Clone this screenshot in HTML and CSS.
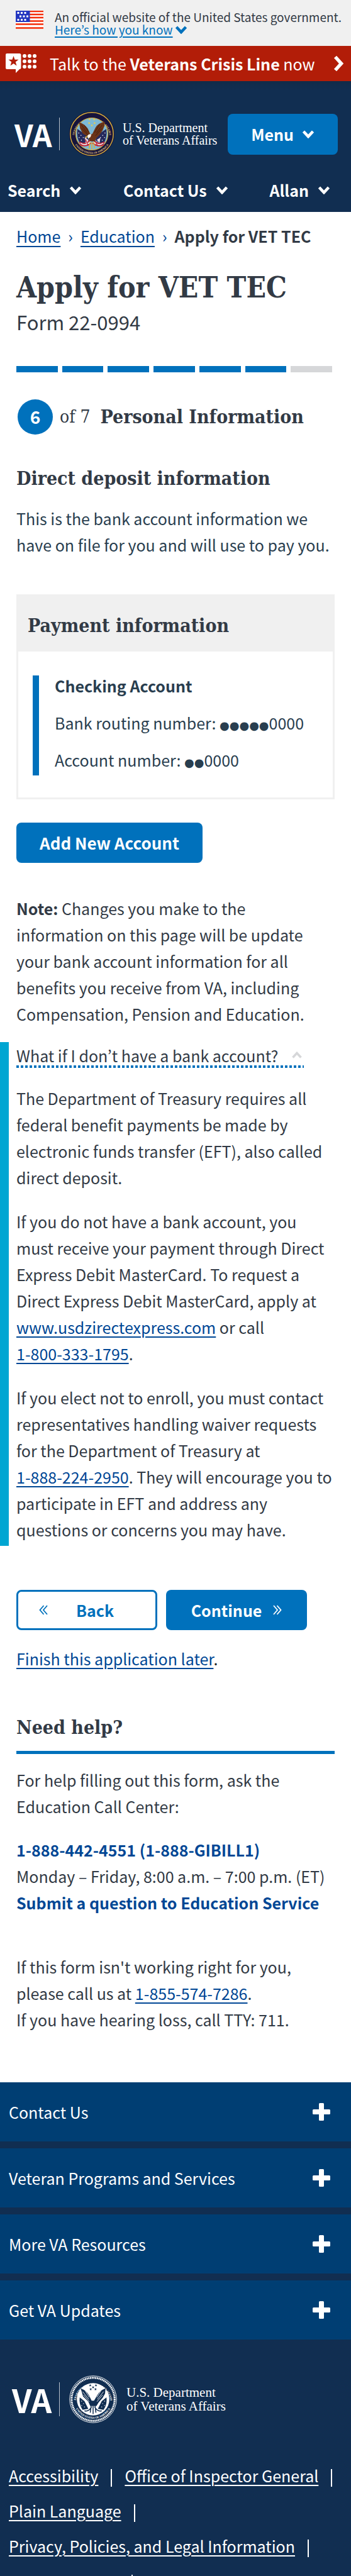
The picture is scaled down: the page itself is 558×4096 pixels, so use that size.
FILE: index.html
```html
<!DOCTYPE html>
<html lang="en">
<head>
<meta charset="utf-8">
<meta name="viewport" content="width=device-width, initial-scale=1">
<title>Apply for VET TEC | Veterans Affairs</title>
<link rel="stylesheet" href="styles.css">
</head>
<body>
<svg class="defs" aria-hidden="true">
  <symbol id="chev" viewBox="0 0 20 14"><path d="M2.500 3 10 11l7.500-8" fill="none" stroke="currentColor" stroke-width="4.600"/></symbol>
  <symbol id="plus" viewBox="0 0 28 28"><path d="M11.500 0h5q1.500 0 1.500 1.500V10h8.500q1.500 0 1.500 1.500v5q0 1.500-1.500 1.500H18v8.500q0 1.500-1.500 1.500h-5q-1.500 0-1.500-1.500V18H1.500Q0 18 0 16.500v-5Q0 10 1.500 10H10V1.500Q10 0 11.500 0z" fill="currentColor"/></symbol>
  <symbol id="star" viewBox="-10 -10 20 20"><path d="M0-10 2.400-3.100 9.500-3.100 3.800 1.200 5.900 8.100 0 4-5.900 8.100-3.800 1.200-9.500-3.100-2.400-3.100z" fill="currentColor"/></symbol>
</svg>

<div class="gov">
  <svg class="flag" viewBox="0 0 44 29" aria-hidden="true">
    <rect width="44" height="29" fill="#fff"/>
    <path d="M22 1h22M22 6h22M22 11h22M22 16.500h22M0 21.500h44M0 27.500h44" stroke="#f42e0a" stroke-width="2.400"/>
    <rect width="22.500" height="18" fill="#2336c0"/>
    <path d="M2.500 3.500h15M6 9h15M2.500 14.500h15" stroke="#fff" stroke-width="3" stroke-dasharray="3 2.500"/>
  </svg>
  <div class="gov-text">
    <span>An official website of the United States government.</span>
    <button type="button" class="gov-more"><span>Here’s how you know</span><svg class="chev" aria-hidden="true"><use href="#chev"/></svg></button>
  </div>
</div>

<a class="crisis" href="#crisis">
  <svg class="crisis-icon" viewBox="0 0 50 32" aria-hidden="true">
    <path d="M2 0h20q2.500 0 2.500 2.500V23q0 2-2.500 2l-6 6v-6H2q-2 0-2-2V2Q0 0 2 0z" fill="#fff"/>
    <use href="#star" x="4" y="4" width="17" height="17" color="#b21d08"/>
    <g fill="#fff"><circle cx="30" cy="4" r="3"/><circle cx="38" cy="4" r="3"/><circle cx="46" cy="4" r="3"/><circle cx="30" cy="12.500" r="3"/><circle cx="38" cy="12.500" r="3"/><circle cx="46" cy="12.500" r="3"/><circle cx="30" cy="21" r="3"/><circle cx="38" cy="21" r="3"/><circle cx="46" cy="21" r="3"/></g>
  </svg>
  <span class="crisis-text">Talk to the <b>Veterans Crisis Line</b> now</span>
  <svg class="crisis-arrow" viewBox="0 0 17 26" aria-hidden="true"><path d="M3 2.500 12.500 13 3 23.500" fill="none" stroke="#fff" stroke-width="5.500"/></svg>
</a>

<header class="header">
  <div class="brand-row">
    <a class="brand" href="#home">
      <span class="va">VA</span>
      <svg class="seal" viewBox="-50 -50 100 100" aria-hidden="true">
        <circle r="50" fill="#17143c"/><circle r="47.500" fill="none" stroke="#d9b23c" stroke-width="2"/>
        <path id="arcTop" d="M-39 4A39.200 39.200 0 0 1 39 4" fill="none"/>
        <path id="arcBot" d="M-43 8A43.700 43.700 0 0 0 43 8" fill="none"/>
        <text class="seal-text gold"><textPath href="#arcTop" startOffset="50%" text-anchor="middle">DEPARTMENT OF VETERANS AFFAIRS</textPath></text>
        <text class="seal-text gold"><textPath href="#arcBot" startOffset="50%" text-anchor="middle">UNITED STATES OF AMERICA</textPath></text>
        <circle r="35.500" fill="#7db9d6" stroke="#d9b23c" stroke-width="1.500"/>
        <path d="M-32-11Q-22-4-12 2L-6 14-24 24Q-35 10-32-11zM32-11Q22-4 12 2L8 14 24 24Q35 10 32-11z" fill="#25295c"/>
        <path d="M-29-2h.1M-24 3h.1M-28 8h.1M-19 8h.1M-23 14h.1M29-2h.1M24 3h.1M28 8h.1M19 8h.1M23 14h.1" stroke="#fff" stroke-width="2" stroke-linecap="round"/>
        <path d="M-28 18Q-16 26-4 14M-27 23Q-14 30-2 20M28 18Q16 26 4 14M27 23Q14 30 2 20" fill="none" stroke="#c4283a" stroke-width="3"/>
        <path d="M-25 20.500Q-14 28-3 17M25 20.500Q14 28 3 17" fill="none" stroke="#fff" stroke-width="1.800"/>
        <path d="M-28-26Q-16-22-9-12L-3 1 1 0 8-14Q14-24 28-27L28-18 24-8 17 2 10 9 6 17-5 16-8 7-20-1-26-12z" fill="#6b3418"/>
        <path d="M-23-20-10-2M-22-12-8 3M23-20 10-2M22-12 8 4M17-21 6-3M-17-20-7-4" stroke="#3e1c0c" stroke-width="1.200"/>
        <path d="M-10 4q3-5 9-3l-2 6-5 3z" fill="#f5f1e8"/><path d="M-10 4l-6 3 5 2z" fill="#e9b72e"/>
        <path d="M-16 7l8 6-4 12zM11 13l8-5-2 12z" fill="#e9e2ea"/>
        <path d="M-4 18-6 32M0 18V34M4 18 6 31" stroke="#e2b13b" stroke-width="2.200"/><path d="M-14 12-8 26M9 20 14 27" stroke="#c4283a" stroke-width="2"/>
        <g color="#f2cd3f"><use href="#star" x="-8" y="-35" width="6" height="6"/><use href="#star" x="2" y="-35" width="6" height="6"/><use href="#star" x="-9" y="-27" width="6" height="6"/><use href="#star" x="3" y="-27" width="6" height="6"/><use href="#star" x="-3" y="-22" width="6" height="6"/></g>
      </svg>
      <span class="dept">U.S. Department<br>of Veterans Affairs</span>
    </a>
    <button type="button" class="btn menu">Menu <svg class="chev" aria-hidden="true"><use href="#chev"/></svg></button>
  </div>
  <nav class="tools" aria-label="Site tools">
    <button type="button">Search <svg class="chev" aria-hidden="true"><use href="#chev"/></svg></button>
    <button type="button">Contact Us <svg class="chev" aria-hidden="true"><use href="#chev"/></svg></button>
    <button type="button">Allan <svg class="chev" aria-hidden="true"><use href="#chev"/></svg></button>
  </nav>
</header>

<main class="main">
  <nav class="crumbs" aria-label="Breadcrumb"><a href="#home">Home</a><i>›</i><a href="#education">Education</a><i>›</i><b>Apply for VET TEC</b></nav>
  <h1>Apply for VET TEC</h1>
  <p class="form-no">Form 22-0994</p>
  <div class="progress" role="progressbar" aria-label="Form progress" aria-valuenow="6" aria-valuemin="0" aria-valuemax="7"><i class="on"></i><i class="on"></i><i class="on"></i><i class="on"></i><i class="on"></i><i class="on"></i><i></i></div>
  <div class="step"><span class="step-no">6</span><span class="step-of">of 7</span><h2>Personal Information</h2></div>

  <h3 class="sub">Direct deposit information</h3>
  <p class="intro">This is the bank account information we have on file for you and will use to pay you.</p>
  <section class="card">
    <h3>Payment information</h3>
    <div class="card-body"><div class="account">
      <p><b>Checking Account</b></p>
      <p>Bank routing number: <span class="dots">●●●●●</span>0000</p>
      <p>Account number: <span class="dots">●●</span>0000</p>
    </div></div>
  </section>
  <button type="button" class="btn add">Add New Account</button>
  <p class="note"><b>Note:</b> Changes you make to the information on this page will be update your bank account information for all benefits you receive from VA, including Compensation, Pension and Education.</p>

  <section class="info">
    <button type="button" class="info-toggle" aria-expanded="true">What if I don’t have a bank account?<svg class="caret" viewBox="0 0 16 11" aria-hidden="true"><path d="M1.500 9.500 8 2.500l6.500 7" fill="none" stroke="#d6d7d9" stroke-width="3.600"/></svg></button>
    <p>The Department of Treasury requires all federal benefit payments be made by electronic funds transfer (EFT), also called direct deposit.</p>
    <p>If you do not have a bank account, you must receive your payment through Direct Express Debit MasterCard. To request a Direct Express Debit MasterCard, apply at <a href="#express">www.usdzirectexpress.com</a> or call <a class="tel" href="tel:18003331795">1-800-333-1795</a>.</p>
    <p>If you elect not to enroll, you must contact representatives handling waiver requests for the Department of Treasury at <a class="tel" href="tel:18882242950">1-888-224-2950</a>. They will encourage you to participate in EFT and address any questions or concerns you may have.</p>
  </section>

  <div class="pager">
    <button type="button" class="btn back"><svg class="dbl" viewBox="0 0 14 16" aria-hidden="true"><path d="M7.500 1 1.500 8l6 7M13 1 7 8l6 7" fill="none" stroke="currentColor" stroke-width="1.800"/></svg><span>Back</span></button>
    <button type="button" class="btn next">Continue<svg class="dbl" viewBox="0 0 14 16" aria-hidden="true"><path d="M6.500 1l6 7-6 7M1 1l6 7-6 7" fill="none" stroke="currentColor" stroke-width="1.800"/></svg></button>
  </div>
  <p class="later"><a href="#later">Finish this application later</a>.</p>

  <section class="help">
    <h3>Need help?</h3>
    <p>For help filling out this form, ask the Education Call Center:</p>
    <p class="contact"><a href="tel:18884424551">1-888-442-4551 (1-888-GIBILL1)</a><br>Monday – Friday, 8:00 a.m. – 7:00 p.m. (ET)<br><a href="#ask">Submit a question to Education Service</a></p>
    <p>If this form isn't working right for you, please call us at <a class="tel" href="tel:18555747286">1-855-574-7286</a>.<br>If you have hearing loss, call TTY: 711.</p>
  </section>
</main>

<footer class="footer">
  <div class="acc">
    <button type="button">Contact Us<svg class="plus" aria-hidden="true"><use href="#plus"/></svg></button>
    <button type="button">Veteran Programs and Services<svg class="plus" aria-hidden="true"><use href="#plus"/></svg></button>
    <button type="button">More VA Resources<svg class="plus" aria-hidden="true"><use href="#plus"/></svg></button>
    <button type="button">Get VA Updates<svg class="plus" aria-hidden="true"><use href="#plus"/></svg></button>
  </div>
  <a class="brand foot" href="#home">
    <span class="va">VA</span>
    <svg class="seal" viewBox="-50 -50 100 100" aria-hidden="true">
      <circle r="49" fill="none" stroke="#fff" stroke-width="1.200"/>
      <circle r="45" fill="none" stroke="#fff" stroke-width="4" stroke-dasharray="2.500 1.100"/>
      <path id="arcTopW" d="M-36.500 4A36.700 36.700 0 0 1 36.500 4" fill="none"/>
      <path id="arcBotW" d="M-40 8A40.800 40.800 0 0 0 40 8" fill="none"/>
      <text class="seal-text white"><textPath href="#arcTopW" startOffset="50%" text-anchor="middle">DEPARTMENT OF VETERANS AFFAIRS</textPath></text>
      <text class="seal-text white"><textPath href="#arcBotW" startOffset="50%" text-anchor="middle">UNITED STATES OF AMERICA</textPath></text>
      <circle r="34" fill="#fff"/>
      <g color="#112e51"><use href="#star" x="-9" y="-32" width="6" height="6"/><use href="#star" x="3" y="-32" width="6" height="6"/><use href="#star" x="-3" y="-28" width="6" height="6"/><use href="#star" x="-8" y="-24" width="6" height="6"/><use href="#star" x="2" y="-24" width="6" height="6"/></g>
      <path d="M-26-23Q-14-18-9-9L-3 3 2 3 9-9Q14-18 26-23L25-12 20-3 12 6 7 14-6 14-10 5-21-6z" fill="#112e51"/>
      <path d="M-22-16-9 0M-20-9-8 5M22-16 9 0M20-9 8 5M16-17 8-4M-16-17-8-4" stroke="#fff" stroke-width="1.100"/>
      <path d="M-28-4-18 4-10 20-22 22Q-30 10-28-4zM28-4 18 4 10 20 22 22Q30 10 28-4z" fill="#112e51"/>
      <path d="M-24 4h.1M-20 9h.1M-24 13h.1M-18 16h.1M24 4h.1M20 9h.1M24 13h.1M18 16h.1" stroke="#fff" stroke-width="1.800" stroke-linecap="round"/>
      <path d="M-18 24Q-10 27-3 16M18 24Q10 27 3 16M-4 14-6 28M0 14V31M4 14 6 28" fill="none" stroke="#112e51" stroke-width="2"/>
    </svg>
    <span class="dept">U.S. Department<br>of Veterans Affairs</span>
  </a>
  <ul class="links">
    <li><a href="#a11y">Accessibility</a></li><li><a href="#oig">Office of Inspector General</a></li><li><a href="#plain">Plain Language</a></li><li><a href="#privacy">Privacy, Policies, and Legal Information</a></li><li><a href="#contact">VA.gov Contact</a></li>
  </ul>
</footer>
</body>
</html>
```
FILE: styles.css
```css
*{box-sizing:border-box}
html,body{height:100%}
body{margin:0;overflow:hidden;background:#fff;color:#323a45;font:25px/42px "Noto Sans CJK KR","Open Sans",sans-serif}
p,h1,h2,h3,ul{margin:0;padding:0}
button{margin:0;padding:0;border:0;background:none;color:inherit;font:inherit;text-align:left}
a{color:#004795;text-decoration-thickness:2px;text-underline-offset:4px}
i{font-style:normal}
h1,h2,h3,.step-of{font-family:"DejaVu Serif Condensed","DejaVu Serif",serif}
.tel{white-space:nowrap}
.defs{position:absolute;width:0;height:0}
.chev{width:20px;height:14px}

.gov{display:flex;gap:18px;height:73px;padding:17px 16px 0 25px;background:#f0f0f0}
.flag{flex:none;width:44px;height:29px}
.gov-text{display:flex;flex-direction:column;font-size:19px;line-height:20px;white-space:nowrap}
.gov-more{display:flex;align-items:center;gap:3px;color:#0071bc;text-decoration:underline;text-decoration-thickness:2px;text-underline-offset:3px}

.crisis{display:flex;align-items:center;height:56px;padding:0 11px 0 9px;background:#b21d08;color:#fff;text-decoration:none}
.crisis-icon{width:50px;height:32px}
.crisis-text{margin-left:20px}
.crisis-arrow{width:17px;height:26px;margin-left:auto}

.header{height:208px;padding-top:48px;background:linear-gradient(#112b49,#112e51 14px);color:#fff;font-weight:700}
.brand-row{display:flex;align-items:center;justify-content:space-between;padding:0 21px 0 23px}
.brand{display:flex;align-items:center;color:#fff;text-decoration:none}
.va{display:flex;align-items:center;width:72px;height:52px;border-right:1px solid #b8c0cb;font-size:48px;font-weight:700;line-height:52px}
.seal{width:72px;height:72px;margin:0 13px 0 15px}
.seal-text{font:700 6px "Liberation Serif",serif}
.gold{fill:#e5cb7d}
.white{fill:#fff}
.dept{font:400 20px/20px "Liberation Serif",serif;white-space:nowrap}
.btn{border-radius:8px;background:#0071bc;color:#fff;font-weight:700}
.menu{display:flex;align-items:center;gap:13px;height:65px;padding:0 37px}
.tools{display:flex;justify-content:space-between;padding:32px 33px 0 12px}
.tools button{display:flex;align-items:center;gap:14px}

.main{padding:17px 26px 0}
.crumbs{display:flex;gap:12px}
.crumbs a{text-underline-offset:5px}
.crumbs i{color:#004795}
h1{margin-top:31px;font-size:46px;line-height:60px}
.form-no{margin-top:4px;font-size:31px;line-height:42px}
.progress{display:flex;gap:7px;margin-top:49px;padding-right:4px}
.progress i{flex:1;height:10px;background:#d6d7d9}
.progress .on{background:#0071bc}
.step{display:flex;align-items:center;margin:43px 0 0 2px}
.step-no{width:56px;height:56px;border-radius:50%;background:#0071bc;color:#fff;font-size:28px;font-weight:700;line-height:54px;text-align:center}
.step-of{margin-left:11px;font-size:28px}
h2{margin-left:16px;font-size:30px}
h3{font-size:30px;line-height:42px}
.sub{margin-top:49px}
.intro{margin-top:21px}
.intro,.card-body{color:#293e4f}
.card{margin-top:58px;border:3px solid #f0f0f0}
.card h3{padding:26px 15px 20px;background:#f0f0f0}
.card-body{padding:38px 23px 35px}
.account{display:flex;flex-direction:column;gap:29px;padding:1px 0 10px 25px;border-left:10px solid #0071bc;line-height:30px}
.dots{font:18px/1 "DejaVu Sans",sans-serif}
.add{display:block;height:64px;margin-top:37px;padding:0 37px;font-size:26px}
.note{margin-top:51px}
.info{display:flex;flex-direction:column;gap:28px;margin:24px -26px 0;padding:0 26px 5px 12px;border-left:14px solid #00a6d2}
.info-toggle{display:flex;align-items:center;align-self:flex-start;height:41px;padding-right:3px;background:repeating-linear-gradient(90deg,#0071bc 0 4px,#fff0 4px 7px) 0 100%/100% 4px no-repeat}
.info-toggle+p{margin-top:-1px}
.caret{width:16px;height:11px;margin-left:22px}
.pager{display:flex;gap:14px;margin-top:70px}
.btn.back,.btn.next{display:flex;align-items:center;width:224px;height:64px}
.dbl{width:14px;height:16px}
.back{padding-left:33px;border:3px solid #0071bc;background:#fff;color:#0071bc}
.back span{margin-left:45px}
.next{justify-content:center;gap:18px}
.later{margin-top:24px;color:#212121}
.help h3{margin-top:68px;padding-bottom:16px;border-bottom:5px solid #0071bc}
.help p{margin-top:20px}
.help .contact{margin-top:27px}
.contact a{font-weight:700;text-decoration:none}
.help .contact+p{margin-top:60px}

.footer{margin-top:79px;padding-bottom:28px;background:#112e51;color:#fff}
.acc{display:flex;flex-direction:column;gap:11px}
.acc button{display:flex;align-items:center;justify-content:space-between;height:94px;padding:0 33px 0 14px;background:#003e73}
.plus{width:28px;height:28px}
.foot{margin:57px 0 0 19px}
.foot .va{width:76px;height:54px;font-size:51px}
.foot .seal{width:76px;height:76px;margin-right:15px}
.foot .dept{font-size:21px;line-height:22px}
.links{display:flex;flex-wrap:wrap;gap:14px 20px;margin:62px 14px 0;list-style:none}
.links li{display:flex;align-items:center;gap:20px}
.links li::after{content:"";width:2px;height:28px;margin-top:8px;background:#fff}
.links a{color:#fff;white-space:nowrap}
```
